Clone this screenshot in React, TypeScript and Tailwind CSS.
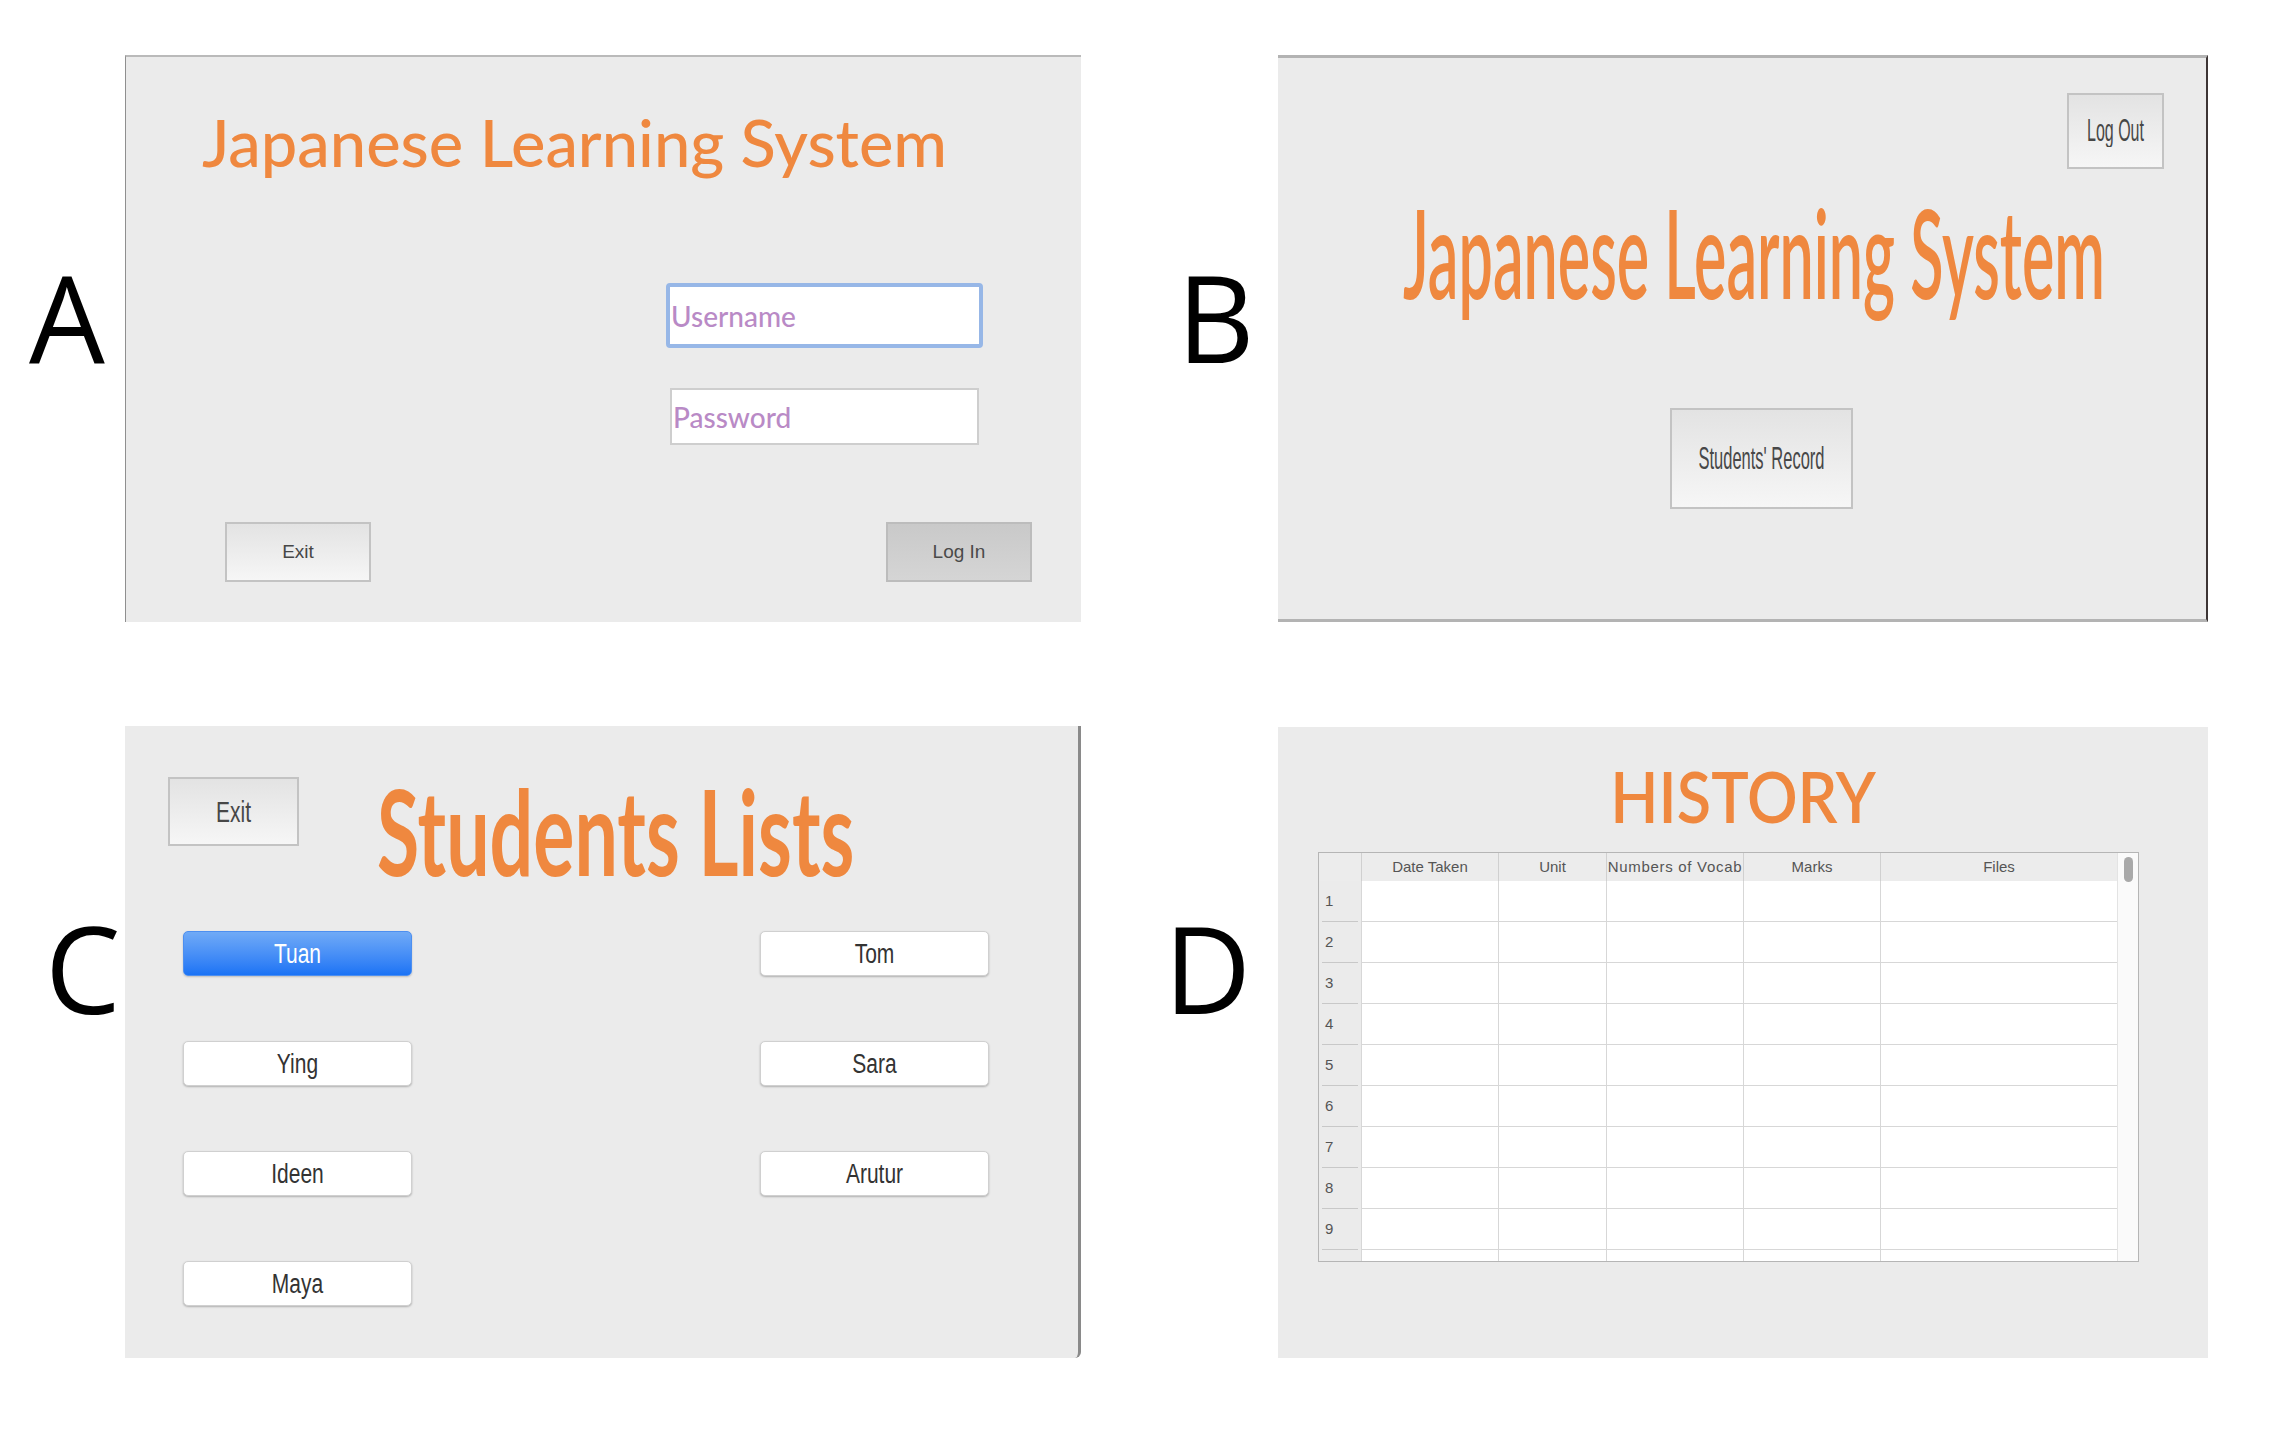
import React from "react";

const label = "font-['Open_Sans',sans-serif] text-[120px] leading-[120px] text-black";
const title = "font-['Lato',sans-serif] leading-none text-[#ef883f]";
const macBtn =
  "flex items-center justify-center border-2 border-[#c3c3c3] bg-linear-to-b from-[#e3e3e3] to-[#f6f6f6] text-[#474747]";

const students = ["Tuan", "Tom", "Ying", "Sara", "Ideen", "Arutur", "Maya"];

const columns = [
  { name: "Date Taken", w: "w-[137px]" },
  { name: "Unit", w: "w-[108px]" },
  { name: "Numbers of Vocab", w: "w-[137px]" },
  { name: "Marks", w: "w-[137px]" },
  { name: "Files", w: "w-[237px]" },
];

function LoginPanel() {
  return (
    <div className="flex w-[956px] shrink-0 flex-col border-l border-t-2 border-l-[#8f8f8f] border-t-[#bababa] bg-[#ebebeb]">
      <h1 className={`ml-[76px] mt-[53px] text-[65px] font-medium ${title}`}>Japanese Learning System</h1>
      <div className="ml-[540px] mt-[108px] flex flex-col items-start font-['Lato',sans-serif] text-[28px] font-medium text-[#b98ac6]">
        <div className="flex h-[65px] w-[317px] items-center rounded-[4px] border-4 border-[#97b7e7] bg-white pl-[1px]">
          Username
        </div>
        <div className="ml-[4px] mt-[40px] flex h-[57px] w-[309px] items-center border-2 border-[#cecece] bg-white pl-[1px]">
          Password
        </div>
      </div>
      <div className="mt-[77px] flex justify-between pl-[99px] pr-[49px] text-[19px]">
        <button className={`h-[60px] w-[146px] ${macBtn}`}>Exit</button>
        <button className="flex h-[60px] w-[146px] items-center justify-center border-2 border-[#bcbcbc] bg-linear-to-b from-[#c9c9c9] to-[#d5d5d5] text-[#4a4a4a]">
          Log In
        </button>
      </div>
    </div>
  );
}

function MenuPanel() {
  return (
    <div className="flex w-[930px] shrink-0 flex-col border-y-[3px] border-r-2 border-y-[#b3b3b3] border-r-[#3d3535] bg-[#ebebeb]">
      <div className="mt-[35px] flex justify-end pr-[42px]">
        <button className={`h-[76px] w-[97px] text-[16px] ${macBtn}`}>
          <span className="inline-block scale-y-[1.95]">Log Out</span>
        </button>
      </div>
      <div className="mt-[52px] flex h-[60px] justify-center pl-[24px]">
        <span className={`inline-block scale-y-[2.02] text-[61px] font-semibold ${title}`}>Japanese Learning System</span>
      </div>
      <div className="mt-[127px] flex justify-center pl-[39px]">
        <button className={`h-[101px] w-[183px] text-[16.5px] ${macBtn}`}>
          <span className="inline-block scale-y-[1.9]">Students' Record</span>
        </button>
      </div>
    </div>
  );
}

function StudentsPanel() {
  return (
    <div className="flex w-[956px] shrink-0 flex-col rounded-br-[6px] border-r-[3px] border-r-[#8a8a8a] bg-[#ebebeb]">
      <div className="flex items-start">
        <button className={`ml-[43px] mt-[51px] h-[69px] w-[131px] text-[21px] ${macBtn}`}>
          <span className="inline-block scale-y-[1.4]">Exit</span>
        </button>
        <h1 className={`ml-[78px] mt-[66px] scale-y-[1.53] text-[77px] font-bold ${title}`}>Students Lists</h1>
      </div>
      <div className="ml-[58px] mt-[62px] grid grid-cols-[229px_229px] gap-x-[348px] gap-y-[65px] text-[21px]">
        {students.map((s, i) =>
          i === 0 ? (
            <button
              key={s}
              className="flex h-[45px] items-center justify-center rounded-[5px] border border-[#4d8ff0] bg-linear-to-b from-[#70aaf6] to-[#1a73f5] text-white shadow-[0_1px_2px_rgba(0,0,0,0.2)]"
            >
              <span className="inline-block scale-y-[1.33]">{s}</span>
            </button>
          ) : (
            <button
              key={s}
              className="flex h-[45px] items-center justify-center rounded-[5px] border border-[#d0d0d0] bg-white text-[#333] shadow-[0_1px_2px_rgba(0,0,0,0.25)]"
            >
              <span className="inline-block scale-y-[1.33]">{s}</span>
            </button>
          )
        )}
      </div>
    </div>
  );
}

function HistoryPanel() {
  const rows = Array.from({ length: 10 }, (_, i) => i + 1);
  return (
    <div className="mt-px flex h-[631px] w-[930px] shrink-0 flex-col bg-[#ebebeb]">
      <div className="mt-[37px] flex h-[62px] justify-center">
        <span className={`inline-block scale-y-[1.13] text-[63px] font-semibold ${title}`}>HISTORY</span>
      </div>
      <div className="ml-[40px] mt-[26px] flex h-[410px] w-[821px] overflow-hidden border border-[#b5b5b5] bg-white text-[15px] text-[#555]">
        <div className="flex w-[798px] flex-col">
          <div className="flex h-[28px] shrink-0 bg-[#ececec]">
            <div className="w-[42px]" />
            {columns.map((c) => (
              <div
                key={c.name}
                className={`flex ${c.w} items-center justify-center overflow-hidden whitespace-nowrap border-l border-[#d0d0d0] ${
                  c.name === "Numbers of Vocab" ? "tracking-[0.7px]" : ""
                }`}
              >
                {c.name}
              </div>
            ))}
          </div>
          {rows.map((n) => (
            <div key={n} className="flex h-[41px] shrink-0">
              <div className="flex w-[42px] flex-col bg-[#ebebeb] px-[3px]">
                <div className="flex flex-1 items-center border-b border-[#c8c8c8] pl-[3px]">{n < 10 ? n : ""}</div>
              </div>
              {columns.map((c) => (
                <div key={c.name} className={`${c.w} border-b border-l border-[#d7d7d7] bg-white`} />
              ))}
            </div>
          ))}
        </div>
        <div className="flex w-[21px] flex-col items-center border-l border-[#e3e3e3] bg-[#fafafa] pt-[4px]">
          <div className="h-[25px] w-[9px] rounded-full bg-[#a9a9a9]" />
        </div>
      </div>
    </div>
  );
}

export default function App() {
  return (
    <div className="h-[1444px] w-[2275px] overflow-hidden bg-white pt-[55px] font-['Liberation_Sans',Arial,sans-serif]">
      <div className="flex h-[567px]">
        <div className={`w-[125px] shrink-0 pl-[29px] pt-[202px] ${label}`}>A</div>
        <LoginPanel />
        <div className={`w-[197px] shrink-0 pl-[96px] pt-[202px] ${label}`}>B</div>
        <MenuPanel />
      </div>
      <div className="mt-[104px] flex h-[632px]">
        <div className={`w-[125px] shrink-0 pl-[45px] pt-[182px] ${label}`}>C</div>
        <StudentsPanel />
        <div className={`w-[197px] shrink-0 pl-[83px] pt-[182px] ${label}`}>D</div>
        <HistoryPanel />
      </div>
    </div>
  );
}
